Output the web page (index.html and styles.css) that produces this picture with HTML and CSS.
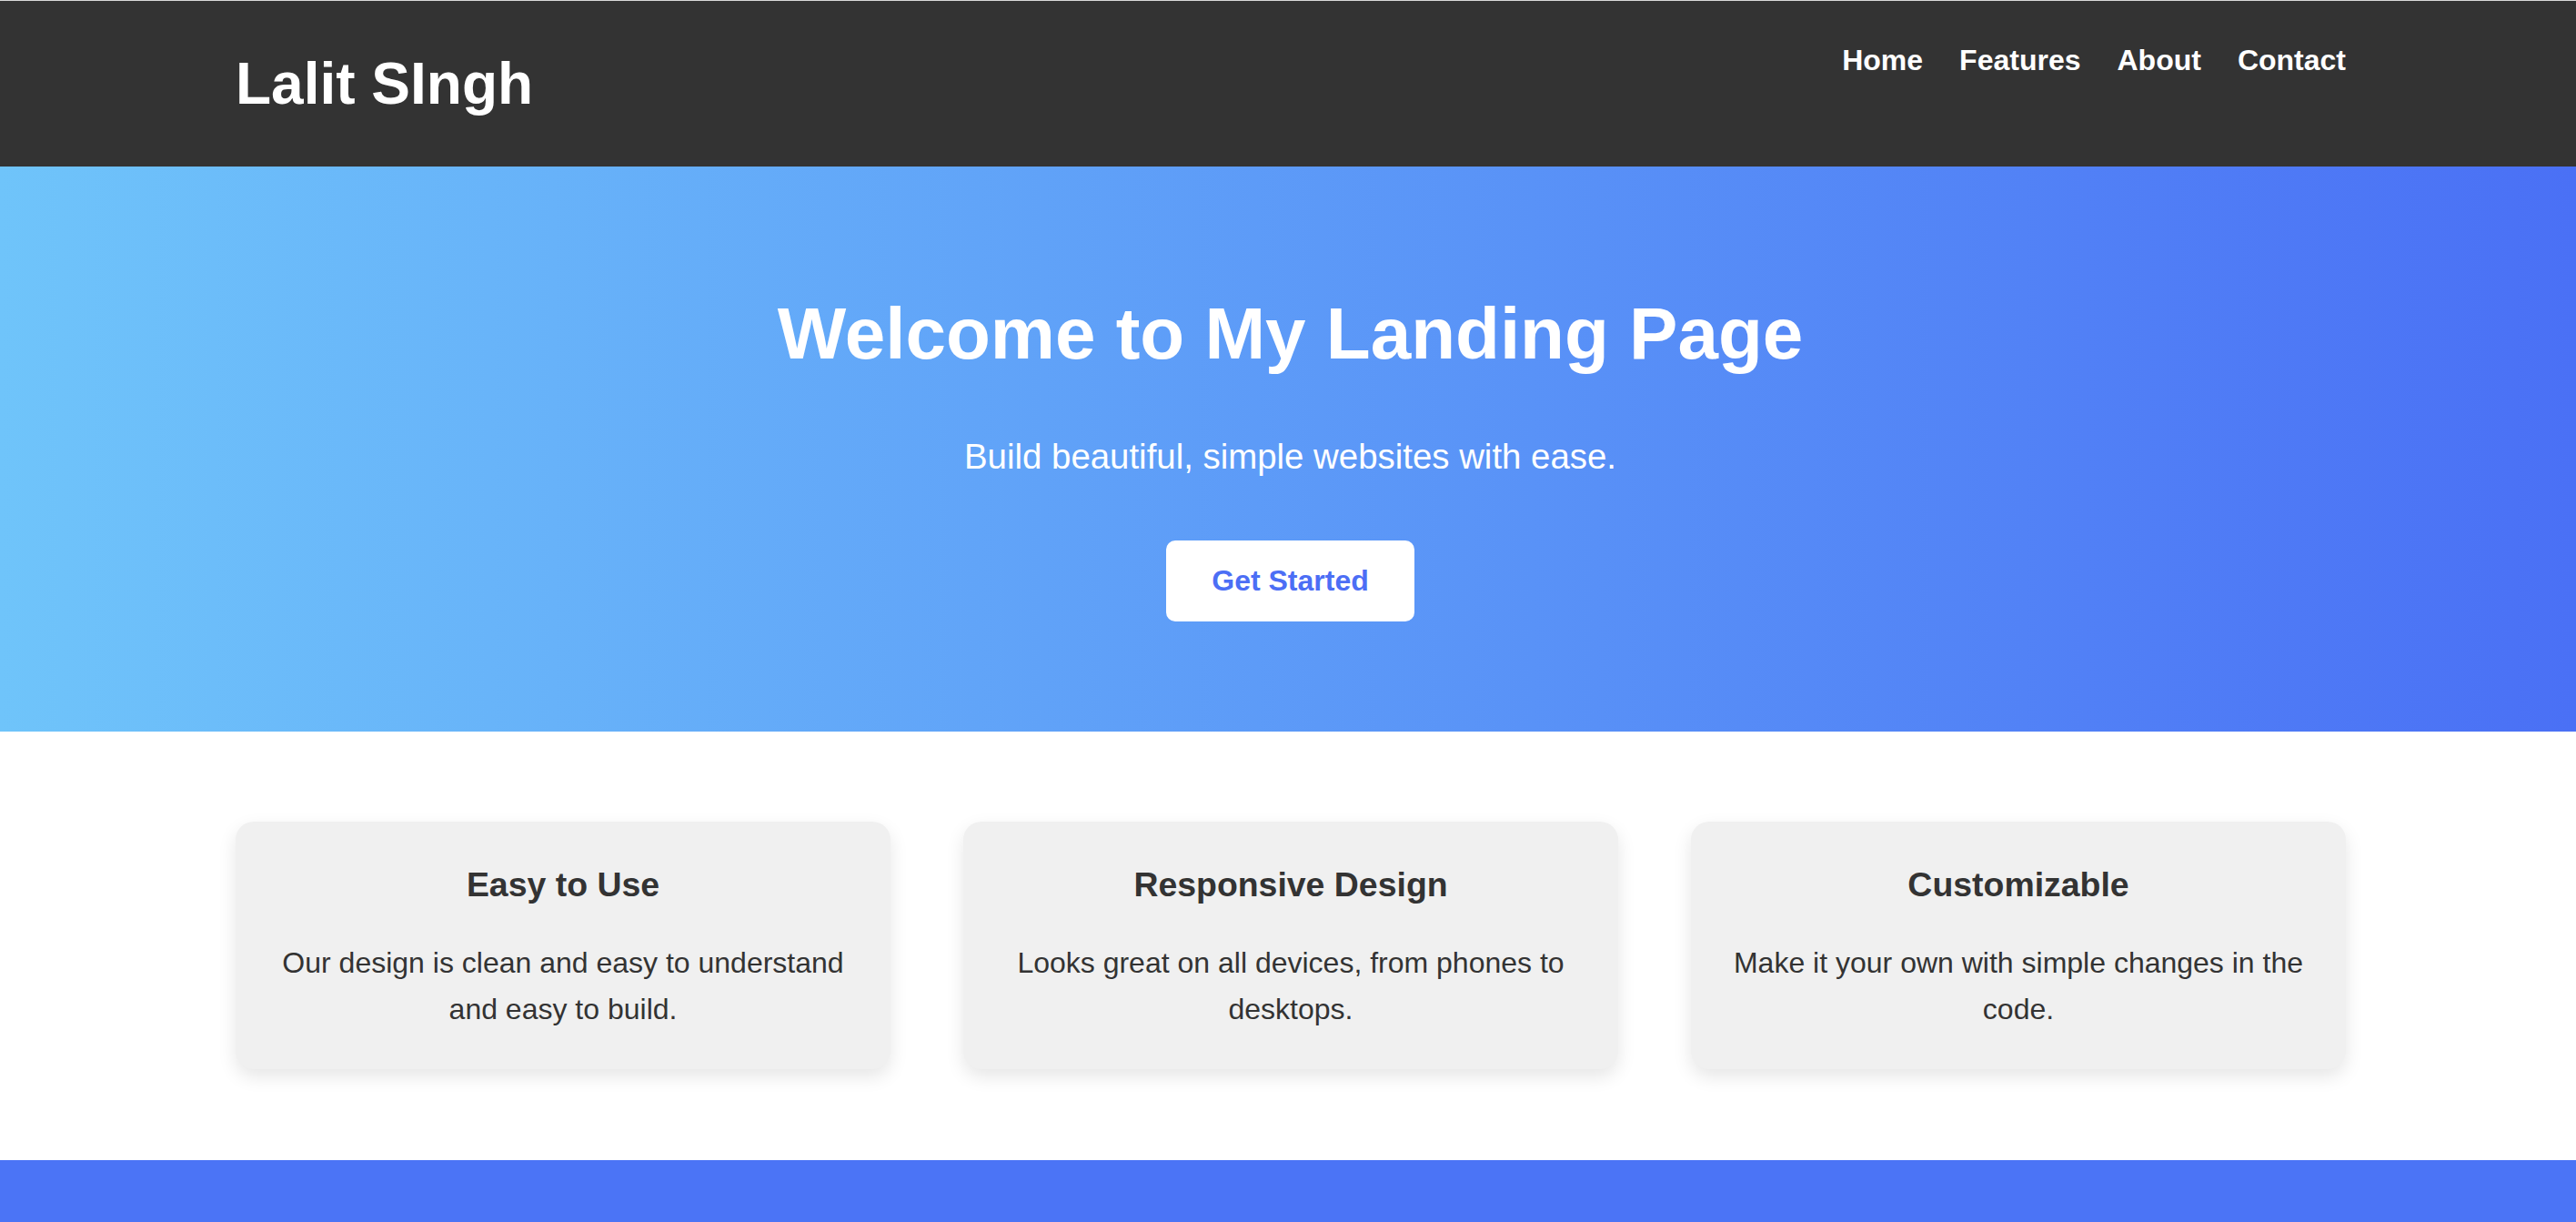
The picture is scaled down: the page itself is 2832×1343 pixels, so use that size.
FILE: index.html
```html
<!DOCTYPE html>
<html lang="en">
<head>
<meta charset="UTF-8">
<title>Lalit SIngh - Landing Page</title>
<link rel="stylesheet" href="styles.css">
</head>
<body>
  <header class="site-header">
    <div class="container header-inner">
      <div class="logo">Lalit SIngh</div>
      <nav class="nav">
        <a href="#" class="nav-link">Home</a>
        <a href="#" class="nav-link">Features</a>
        <a href="#" class="nav-link">About</a>
        <a href="#" class="nav-link">Contact</a>
      </nav>
    </div>
  </header>

  <section class="hero">
    <h1 class="hero-title">Welcome to My Landing Page</h1>
    <p class="hero-sub">Build beautiful, simple websites with ease.</p>
    <a href="#" class="btn">Get Started</a>
  </section>

  <section class="features">
    <div class="container feature-grid">
      <div class="card">
        <h3 class="card-title">Easy to Use</h3>
        <p class="card-text">Our design is clean and easy to understand and easy to build.</p>
      </div>
      <div class="card">
        <h3 class="card-title">Responsive Design</h3>
        <p class="card-text">Looks great on all devices, from phones to desktops.</p>
      </div>
      <div class="card">
        <h3 class="card-title">Customizable</h3>
        <p class="card-text">Make it your own with simple changes in the code.</p>
      </div>
    </div>
  </section>

  <footer class="site-footer"></footer>
</body>
</html>
```

FILE: styles.css
```css
* {
  box-sizing: border-box;
}

html, body {
  margin: 0;
  padding: 0;
}

body {
  font-family: "Liberation Sans", Arial, sans-serif;
  font-size: 32px;
  line-height: 1.6;
  color: #333333;
  background: #ffffff;
  border-top: 1px solid #d9d9d9;
}

.container {
  width: 2320px;
  max-width: 100%;
  margin-left: calc((100% - 2320px) / 2 + 3px);
  margin-right: auto;
}

/* Header */
.site-header {
  background: #333333;
  color: #ffffff;
  padding: 40px 0;
}

.header-inner {
  display: flex;
  justify-content: space-between;
  align-items: flex-start;
}

.logo {
  font-size: 64px;
  font-weight: bold;
  line-height: 1.6;
}

.nav {
  display: flex;
  gap: 40px;
}

.nav-link {
  color: #ffffff;
  text-decoration: none;
  font-weight: bold;
  font-size: 32px;
}

/* Hero */
.hero {
  background: linear-gradient(to right, #6fc4fa, #4a70f5);
  color: #ffffff;
  text-align: center;
  padding: 120px 0 121px 5px;
}

.hero-title {
  margin: 0 0 40px;
  font-size: 80px;
  font-weight: bold;
  line-height: 1.6;
}

.hero-sub {
  margin: 0 0 61px;
  font-size: 38.4px;
}

.btn {
  display: inline-block;
  background: #ffffff;
  color: #4c6ef5;
  font-weight: bold;
  font-size: 32px;
  text-decoration: none;
  padding: 19px 50px;
  border-radius: 10px;
}

/* Features */
.features {
  padding: 99px 0 100px;
}

.feature-grid {
  display: grid;
  grid-template-columns: repeat(3, 1fr);
  gap: 80px;
}

.card {
  background: #f0f0f0;
  border-radius: 20px;
  padding: 40px;
  text-align: center;
  box-shadow: 0 8px 20px rgba(0, 0, 0, 0.1);
}

.card-title {
  margin: 0 0 30px;
  font-size: 37.44px;
  font-weight: bold;
}

.card-text {
  margin: 0;
  font-size: 32px;
}

/* Footer */
.site-footer {
  background: #4b74f6;
  height: 160px;
}
```
